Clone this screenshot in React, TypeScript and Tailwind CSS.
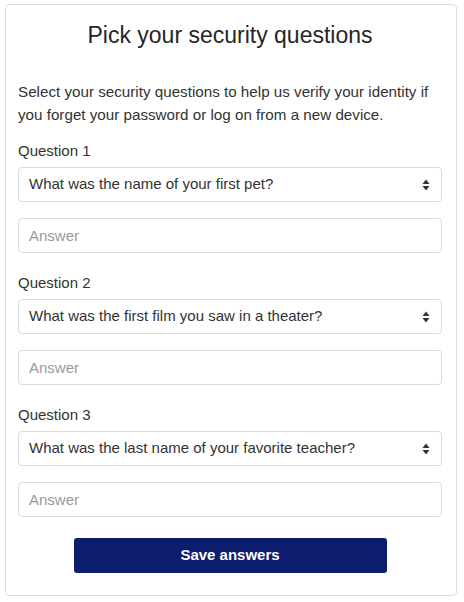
const questions = [
  { label: "Question 1", value: "What was the name of your first pet?" },
  { label: "Question 2", value: "What was the first film you saw in a theater?" },
  { label: "Question 3", value: "What was the last name of your favorite teacher?" },
];

function SortArrows() {
  return (
    <svg width="8" height="12" viewBox="0 0 8 12" className="shrink-0">
      <path d="M4 0.5 L7.5 5 H0.5 Z" fill="#333" />
      <path d="M4 11.5 L7.5 7 H0.5 Z" fill="#333" />
    </svg>
  );
}

export default function App() {
  return (
    <div className="bg-white px-[5px] pt-[4px] font-['Liberation_Sans',Arial,sans-serif] text-[#333]">
      <div className="flex h-[592px] w-[452px] flex-col rounded-[4px] border border-[#dcdcdc] pt-[16px] pr-[14px] pl-[12px]">
        <h1 className="text-center text-[23px] leading-[28px] font-normal text-[#262626]">
          Pick your security questions
        </h1>
        <p className="mt-[31px] text-[15.2px] leading-[23px]">
          Select your security questions to help us verify your identity if you forget your password or log on from a new device.
        </p>

        <div className="mt-[15px] flex flex-col">
          {questions.map((q, i) => (
            <div key={q.label} className={i === 0 ? "" : "mt-[20px]"}>
              <label className="block text-[15px] leading-[20px]">{q.label}</label>
              <div className="mt-[6px] flex h-[35px] items-center justify-between rounded-[4px] border border-[#d7dce2] bg-white pr-[11px] pl-[10px] text-[15px]">
                <span>{q.value}</span>
                <SortArrows />
              </div>
              <input
                type="text"
                placeholder="Answer"
                className="mt-[16px] block h-[35px] w-full rounded-[4px] border border-[#d7dce2] px-[10px] text-[15px] outline-none placeholder:text-[#9a9a9a]"
              />
            </div>
          ))}
        </div>

        <div className="mt-[21px] flex justify-center">
          <button className="h-[35px] w-[313px] rounded-[3px] bg-[#0c1d6d] text-[15px] font-bold text-white">
            Save answers
          </button>
        </div>
      </div>
    </div>
  );
}
